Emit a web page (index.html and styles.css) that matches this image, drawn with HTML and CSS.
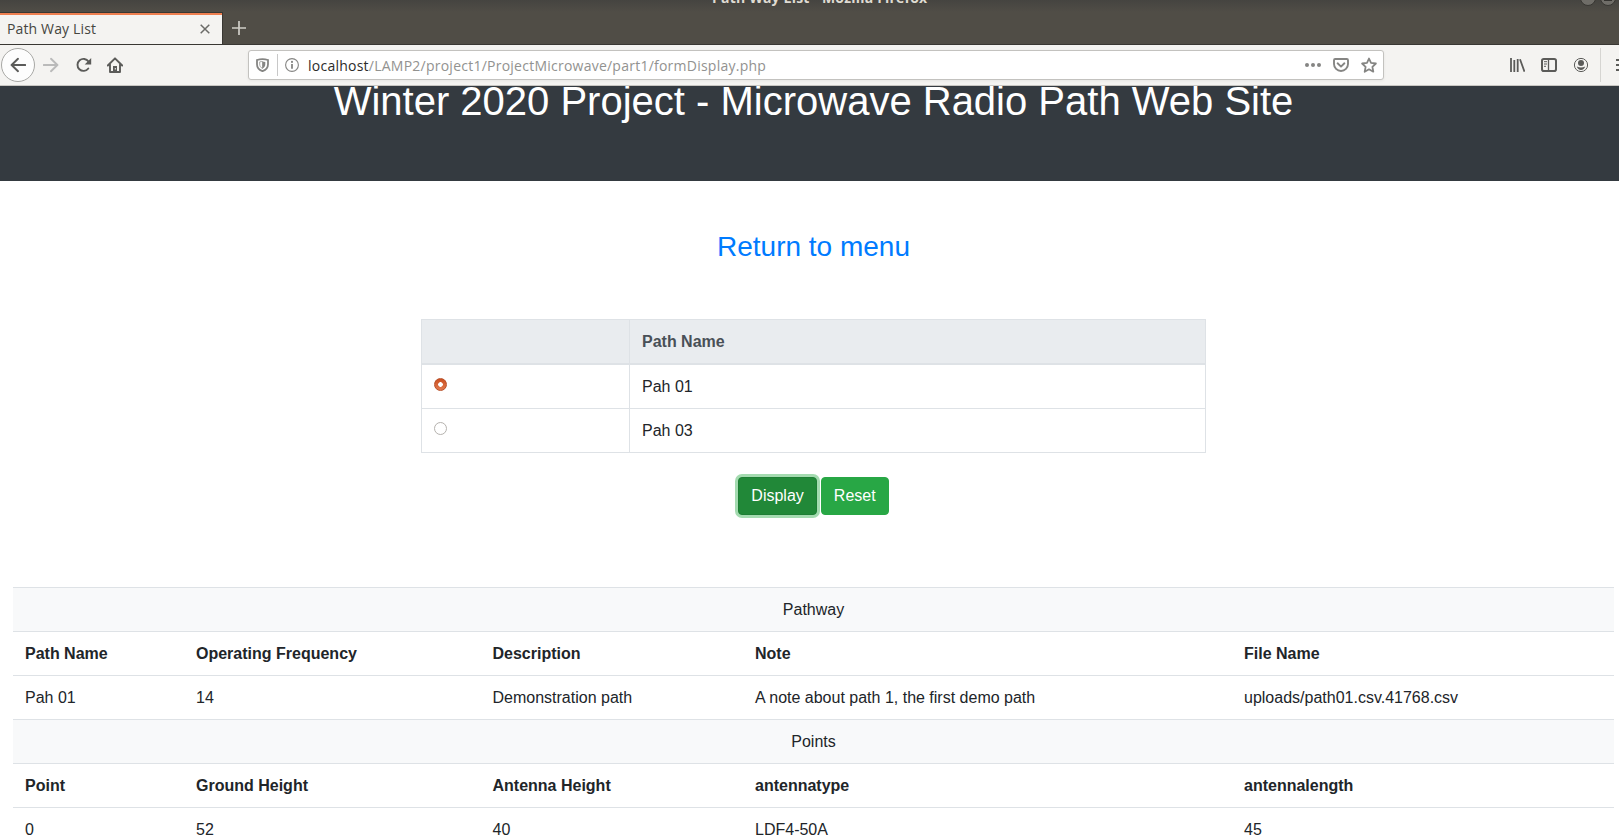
FILE: index.html
```html
<!DOCTYPE html>
<html lang="en">
<head>
<meta charset="utf-8">
<title>Path Way List</title>
<link rel="stylesheet" href="styles.css">
</head>
<body>
<div class="window">
  <div class="titlebar">
    <span class="window-title">Path Way List - Mozilla Firefox</span>
    <span class="window-button window-button-min"></span>
    <span class="window-button window-button-max"></span>
    <div class="tabs">
      <div class="tab">
        <span class="tab-label">Path Way List</span>
        <svg class="tab-close" width="10" height="10" viewBox="0 0 10 10"><path d="M.7.7l8.6 8.6M9.3.7L.7 9.3" stroke="#6b6b68" stroke-width="1.5"/></svg>
      </div>
      <svg class="tab-new" width="14" height="14" viewBox="0 0 14 14"><path d="M7 0v14M0 7h14" stroke="#d0cec8" stroke-width="1.7"/></svg>
    </div>
  </div>

  <div class="toolbar">
    <div class="nav">
      <span class="back"><svg width="16" height="16" viewBox="0 0 16 16"><path d="M15.3 8H1.5M8 1.8L1.6 8L8 14.2" class="line"/></svg></span>
      <svg class="forward" width="16" height="16" viewBox="0 0 16 16"><path d="M.7 8h13.8M8 1.8L14.4 8L8 14.2" class="line"/></svg>
      <svg class="reload" width="16" height="16" viewBox="0 0 16 16"><path d="M12.3 11.5A6 6 0 1 1 12.5 4.6" class="line"/><path d="M15.2 1v6.5H8.7z" fill="#5b5b59"/></svg>
      <svg class="home" width="16" height="16" viewBox="0 0 16 16"><path d="M.8 8.5L8 1.3l7.2 7.2M3 7.5V15h10V7.5" class="line"/><path d="M6 9h4v6H6z" fill="#5b5b59"/><path d="M7.8 11h1v1.5h-1z" fill="#f4f3f1"/></svg>
    </div>
    <div class="urlbar">
      <svg class="shield" width="13" height="14" viewBox="0 0 13 14"><path d="M1 2q5.500-1.800 11 0v4.200c0 3.200-1.800 5.600-5.500 7-3.700-1.400-5.500-3.800-5.500-7z" fill="none" stroke="#858583" stroke-width="1.8"/><path d="M6.500 3.500v7C4.600 9.600 3.700 8 3.700 6V3.900q1.400-.4 2.800-.4z" fill="#fff"/><path d="M6.500 3.500q1.500 0 2.800.4V6c0 2-1 3.600-2.800 4.500z" fill="#858583"/><path d="M6.500 3.500v7C4.600 9.600 3.700 8 3.700 6V3.900q1.400-.4 2.800-.4z" fill="none" stroke="#858583" stroke-width=".7"/></svg>
      <span class="divider"></span>
      <svg class="info" width="14" height="14" viewBox="0 0 14 14"><circle cx="7" cy="7" r="6.4" fill="none" stroke="#858583" stroke-width="1.1"/><circle cx="7" cy="3.9" r="1.05" fill="#858583"/><path d="M6.1 6h1.8v4.7H6.1z" fill="#858583"/></svg>
      <span class="url"><span class="host">localhost</span><span class="path">/LAMP2/project1/ProjectMicrowave/part1/formDisplay.php</span></span>
      <svg class="action" width="16" height="16" viewBox="0 0 16 16" fill="#858583"><circle cx="2" cy="8" r="2"/><circle cx="8" cy="8" r="2"/><circle cx="14" cy="8" r="2"/></svg>
      <svg class="action" width="16" height="16" viewBox="0 0 16 16" fill="none" stroke="#858583" stroke-width="1.9"><path d="M2.2 2h11.6q1.2 0 1.2 1.2V7a7 7 0 0 1-14 0V3.2Q1 2 2.2 2z"/><path d="M4.6 6.3L8 9.6l3.4-3.3" stroke-linecap="round" stroke-linejoin="round"/></svg>
      <svg class="action" width="16" height="16" viewBox="0 0 16 16"><path d="M8 1.5l2 4.400 4.900.6-3.500 3.300.9 4.900L8 12.300l-4.300 2.400.9-4.900L1.100 6.500 6 5.900z" fill="none" stroke="#858583" stroke-width="1.8" stroke-linejoin="round"/></svg>
    </div>
    <div class="tools">
      <svg width="16" height="16" viewBox="0 0 16 16" fill="none" stroke="#5b5b59" stroke-width="1.8"><path d="M2 1v14M5.300 3v12M8.700 2v13M11 2.300L15.500 14.800"/></svg>
      <svg width="16" height="16" viewBox="0 0 16 16" fill="none" stroke="#5b5b59"><rect x="1" y="2" width="14" height="12" rx="1.8" stroke-width="2"/><path d="M7.500 2v12" stroke-width="1.3"/><path d="M3 4.700h3M3 7h3M3 9.300h2" stroke-width="1"/></svg>
      <svg width="16" height="16" viewBox="0 0 16 16"><circle cx="8" cy="8" r="6.6" fill="none" stroke="#5b5b59"/><circle cx="8" cy="6" r="3" fill="#5b5b59"/><path d="M3.800 9.600q4.200 1.800 8.400 0Q11 13 8 13t-4.200-3.400z" fill="#5b5b59"/></svg>
      <span class="tools-divider"></span>
      <svg width="16" height="16" viewBox="0 0 16 16"><path d="M0 3h16M0 8h16M0 13h16" stroke="#5b5b59" stroke-width="2"/></svg>
    </div>
  </div>

  <div class="page">
    <header class="banner"><h1>Winter 2020 Project - Microwave Radio Path Web Site</h1></header>
    <main>
      <a class="return" href="#">Return to menu</a>
      <form>
        <table class="paths">
          <thead><tr><th class="pick"></th><th>Path Name</th></tr></thead>
          <tbody>
            <tr><td><span class="radio radio-on"></span></td><td>Pah 01</td></tr>
            <tr><td><span class="radio"></span></td><td>Pah 03</td></tr>
          </tbody>
        </table>
        <div class="buttons">
          <button type="button" class="btn btn-active">Display</button>
          <button type="button" class="btn">Reset</button>
        </div>
      </form>
      <table class="details">
        <colgroup><col class="c1"><col class="c2"><col class="c3"><col class="c4"><col class="c5"></colgroup>
        <tr class="section"><td colspan="5">Pathway</td></tr>
        <tr><th>Path Name</th><th>Operating Frequency</th><th>Description</th><th>Note</th><th>File Name</th></tr>
        <tr><td>Pah 01</td><td>14</td><td>Demonstration path</td><td>A note about path 1, the first demo path</td><td>uploads/path01.csv.41768.csv</td></tr>
        <tr class="section"><td colspan="5">Points</td></tr>
        <tr><th>Point</th><th>Ground Height</th><th>Antenna Height</th><th>antennatype</th><th>antennalength</th></tr>
        <tr><td>0</td><td>52</td><td>40</td><td>LDF4-50A</td><td>45</td></tr>
      </table>
    </main>
  </div>
</div>
</body>
</html>
```
FILE: styles.css
```css
* { box-sizing: border-box; }
html, body { margin: 0; height: 100%; overflow: hidden; }
svg { display: block; flex: none; }
.window {
  display: flex;
  flex-direction: column;
  width: 1619px;
  height: 838px;
  overflow: hidden;
  background: #fff;
  font-family: "Open Sans", "Noto Sans", sans-serif;
}

/* Title bar and tabs */
.titlebar {
  position: relative;
  flex: none;
  height: 45px;
  padding-top: 12px;
  overflow: hidden;
  background: linear-gradient(#454440, #504d46 12px);
  border-bottom: 1px solid #393733;
}
.window-title {
  position: absolute;
  top: -12px;
  left: 712px;
  font-size: 14px;
  line-height: 20px;
  font-weight: 700;
  letter-spacing: .2px;
  white-space: nowrap;
  color: #dfdbd2;
}
.window-button {
  position: absolute;
  top: -10px;
  width: 16px;
  height: 16px;
  border-radius: 50%;
  background: #6f6d68;
  border: 1px solid #383733;
}
.window-button-min { left: 1580px; }
.window-button-max { left: 1600px; }
.window-button-max::after {
  content: "";
  display: block;
  width: 8px;
  height: 1px;
  margin: 9px auto 0;
  background: #33322f;
}
.tabs { display: flex; align-items: center; height: 33px; }
.tab {
  display: flex;
  align-items: center;
  flex: none;
  width: 223px;
  height: 33px;
  padding: 0 12px 3px 7px;
  background: #f4f3f1;
  border-right: 1px solid #393733;
  box-shadow: inset 0 1px #393733, inset 0 3px #ee7f50;
}
.tab-label { flex: 1; font-size: 14px; line-height: 20px; letter-spacing: .14px; color: #46463f; padding-top: 4px; }
.tab-close { margin-top: 4px; }
.tab-new { margin: 0 0 1px 9px; }

/* Navigation toolbar */
.toolbar {
  display: flex;
  align-items: center;
  flex: none;
  height: 41px;
  background: #f4f3f1;
  border-bottom: 1px solid #c8c6c2;
}
.nav { display: flex; align-items: center; flex: none; width: 248px; padding-left: 1px; }
.line { fill: none; stroke: #5b5b59; stroke-width: 1.9; stroke-linecap: round; stroke-linejoin: round; }
.back {
  display: grid;
  place-items: center;
  width: 34px;
  height: 34px;
  border: 1px solid #a8a8a5;
  border-radius: 50%;
  background: #fdfdfd;
}
.forward { margin-left: 8px; }
.forward .line { stroke: #bababa; }
.reload { margin-left: 17px; }
.home { margin-left: 15px; }
.urlbar {
  display: flex;
  align-items: center;
  flex: none;
  width: 1136px;
  height: 30px;
  padding: 0 6px 0 7px;
  background: #fff;
  border: 1px solid #c3c2bf;
  border-radius: 3px;
  box-shadow: 0 1px 3px rgba(0, 0, 0, .06);
}
.divider { width: 1px; height: 22px; margin: 0 7px 0 8px; background: #c8c8c8; }
.url { flex: 1; margin-left: 9px; padding-top: 2px; font-size: 14px; line-height: 20px; letter-spacing: .24px; white-space: nowrap; }
.host { color: #2c2c2a; }
.path { color: #929290; }
.action + .action { margin-left: 12px; }
.tools { display: flex; align-items: center; flex: none; margin-left: 125px; gap: 16px; }
.tools-divider { width: 1px; height: 34px; margin: 0 -1px 0 -5px; background: #d6d5d2; }

/* Page content */
.page {
  flex: 1;
  width: 1627px;
  overflow: hidden;
  background: #fff;
  color: #212529;
  font-family: "Liberation Sans", Arial, sans-serif;
  font-size: 16px;
  line-height: 19px;
}
.banner { display: flow-root; height: 95px; background: #343a40; color: #fff; text-align: center; }
.banner h1 { margin: -9px 0 0; font-size: 40px; line-height: 48px; font-weight: 400; }
main { padding: 49px 13px 0; }
.return { display: block; text-align: center; font-size: 28px; line-height: 34px; color: #007bff; text-decoration: none; }
table { border-collapse: separate; border-spacing: 0; table-layout: fixed; }
th, td { padding: 12px; text-align: left; vertical-align: top; }
.paths { width: 785px; margin: 55px auto 0; border-top: 1px solid #dee2e6; border-left: 1px solid #dee2e6; }
.paths th { height: 45px; color: #495057; background: #e9ecef; border-right: 1px solid #dee2e6; border-bottom: 2px solid #dee2e6; }
.paths td { height: 44px; border-right: 1px solid #dee2e6; border-bottom: 1px solid #dee2e6; }
.paths .pick { width: 208px; }
.radio { display: block; width: 13px; height: 13px; margin: 1px 0 0; border: 1px solid #b5b2ae; border-radius: 50%; background: #fff; }
.radio-on { border-color: #b95029; background: radial-gradient(circle, #fff 0 2px, transparent 2.6px), linear-gradient(#cb4f20, #e27b50); }
.buttons { display: flex; justify-content: center; gap: 4px; margin-top: 24px; }
.btn {
  height: 38px;
  padding: 0 12px;
  border: 1px solid #28a745;
  border-radius: 4px;
  background: #28a745;
  color: #fff;
  font: 16px/24px "Liberation Sans", Arial, sans-serif;
}
.btn-active { background: #218838; border-color: #1e7e34; box-shadow: 0 0 0 3px #a4dbb0; }
.details { width: 1601px; margin-top: 72px; }
.details th, .details td { height: 44px; border-top: 1px solid #dee2e6; }
.details .section td { text-align: center; background: #f8f9fa; }
.c1 { width: 171px; }
.c2 { width: 296.5px; }
.c3 { width: 262.5px; }
.c4 { width: 489px; }
.c5 { width: 382px; }
```
